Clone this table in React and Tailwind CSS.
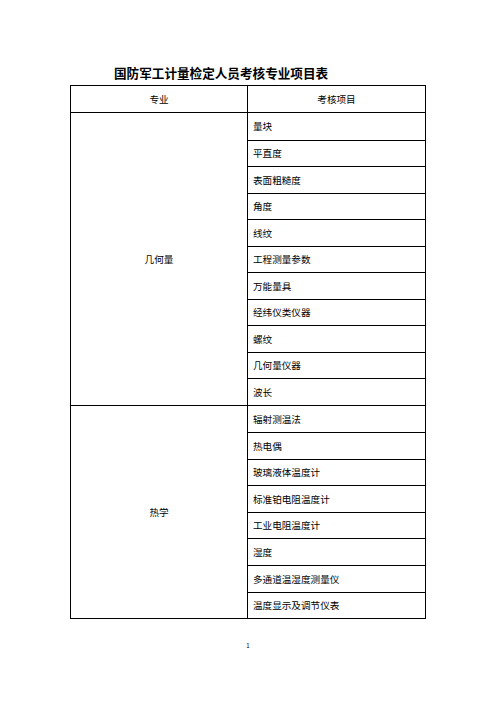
import React from 'react';

// Sections of the table: subject on the left, exam items on the right
const SECTIONS = [
    {
        name: '几何量',
        items: ['量块', '平直度', '表面粗糙度', '角度', '线纹', '工程测量参数', '万能量具', '经纬仪类仪器', '螺纹', '几何量仪器', '波长'],
        rowH: 'h-[26.5px]',
    },
    {
        name: '热学',
        items: ['辐射测温法', '热电偶', '玻璃液体温度计', '标准铂电阻温度计', '工业电阻温度计', '湿度', '多通道温湿度测量仪', '温度显示及调节仪表'],
        rowH: 'h-[26.6px]',
    },
];

const FONT = { fontFamily: '"Noto Sans CJK SC", "Noto Sans", sans-serif' };

const App = () => {
    return (
        <div className="w-[496px] h-[702px] bg-white text-black overflow-hidden" style={FONT}>
            {/* Title */}
            <div className="pt-[63px] pl-[114px]">
                <h1 className="text-[12.6px] leading-[19px] font-bold whitespace-nowrap">
                    国防军工计量检定人员考核专业项目表
                </h1>
            </div>

            {/* Table */}
            <div className="ml-[70px] mt-[3px] w-[356px] border border-black text-[9.6px]">
                <div className="flex h-[27px] border-b border-black">
                    <div className="w-[177px] border-r border-black flex items-center justify-center">专业</div>
                    <div className="flex-1 flex items-center justify-center">考核项目</div>
                </div>

                {SECTIONS.map((sec, si) => (
                    <div key={si} className={`flex ${si > 0 ? 'border-t border-black' : ''}`}>
                        <div className="w-[177px] border-r border-black flex items-center justify-center">
                            {sec.name}
                        </div>
                        <div className="flex-1 flex flex-col">
                            {sec.items.map((item, i) => (
                                <div
                                    key={i}
                                    className={`${sec.rowH} flex items-center pl-[5px] ${i > 0 ? 'border-t border-black' : ''}`}
                                >
                                    {item}
                                </div>
                            ))}
                        </div>
                    </div>
                ))}
            </div>

            {/* Page number */}
            <div className="mt-[23px] text-center text-[6px] leading-[8px]">1</div>
        </div>
    );
};

export default App;
